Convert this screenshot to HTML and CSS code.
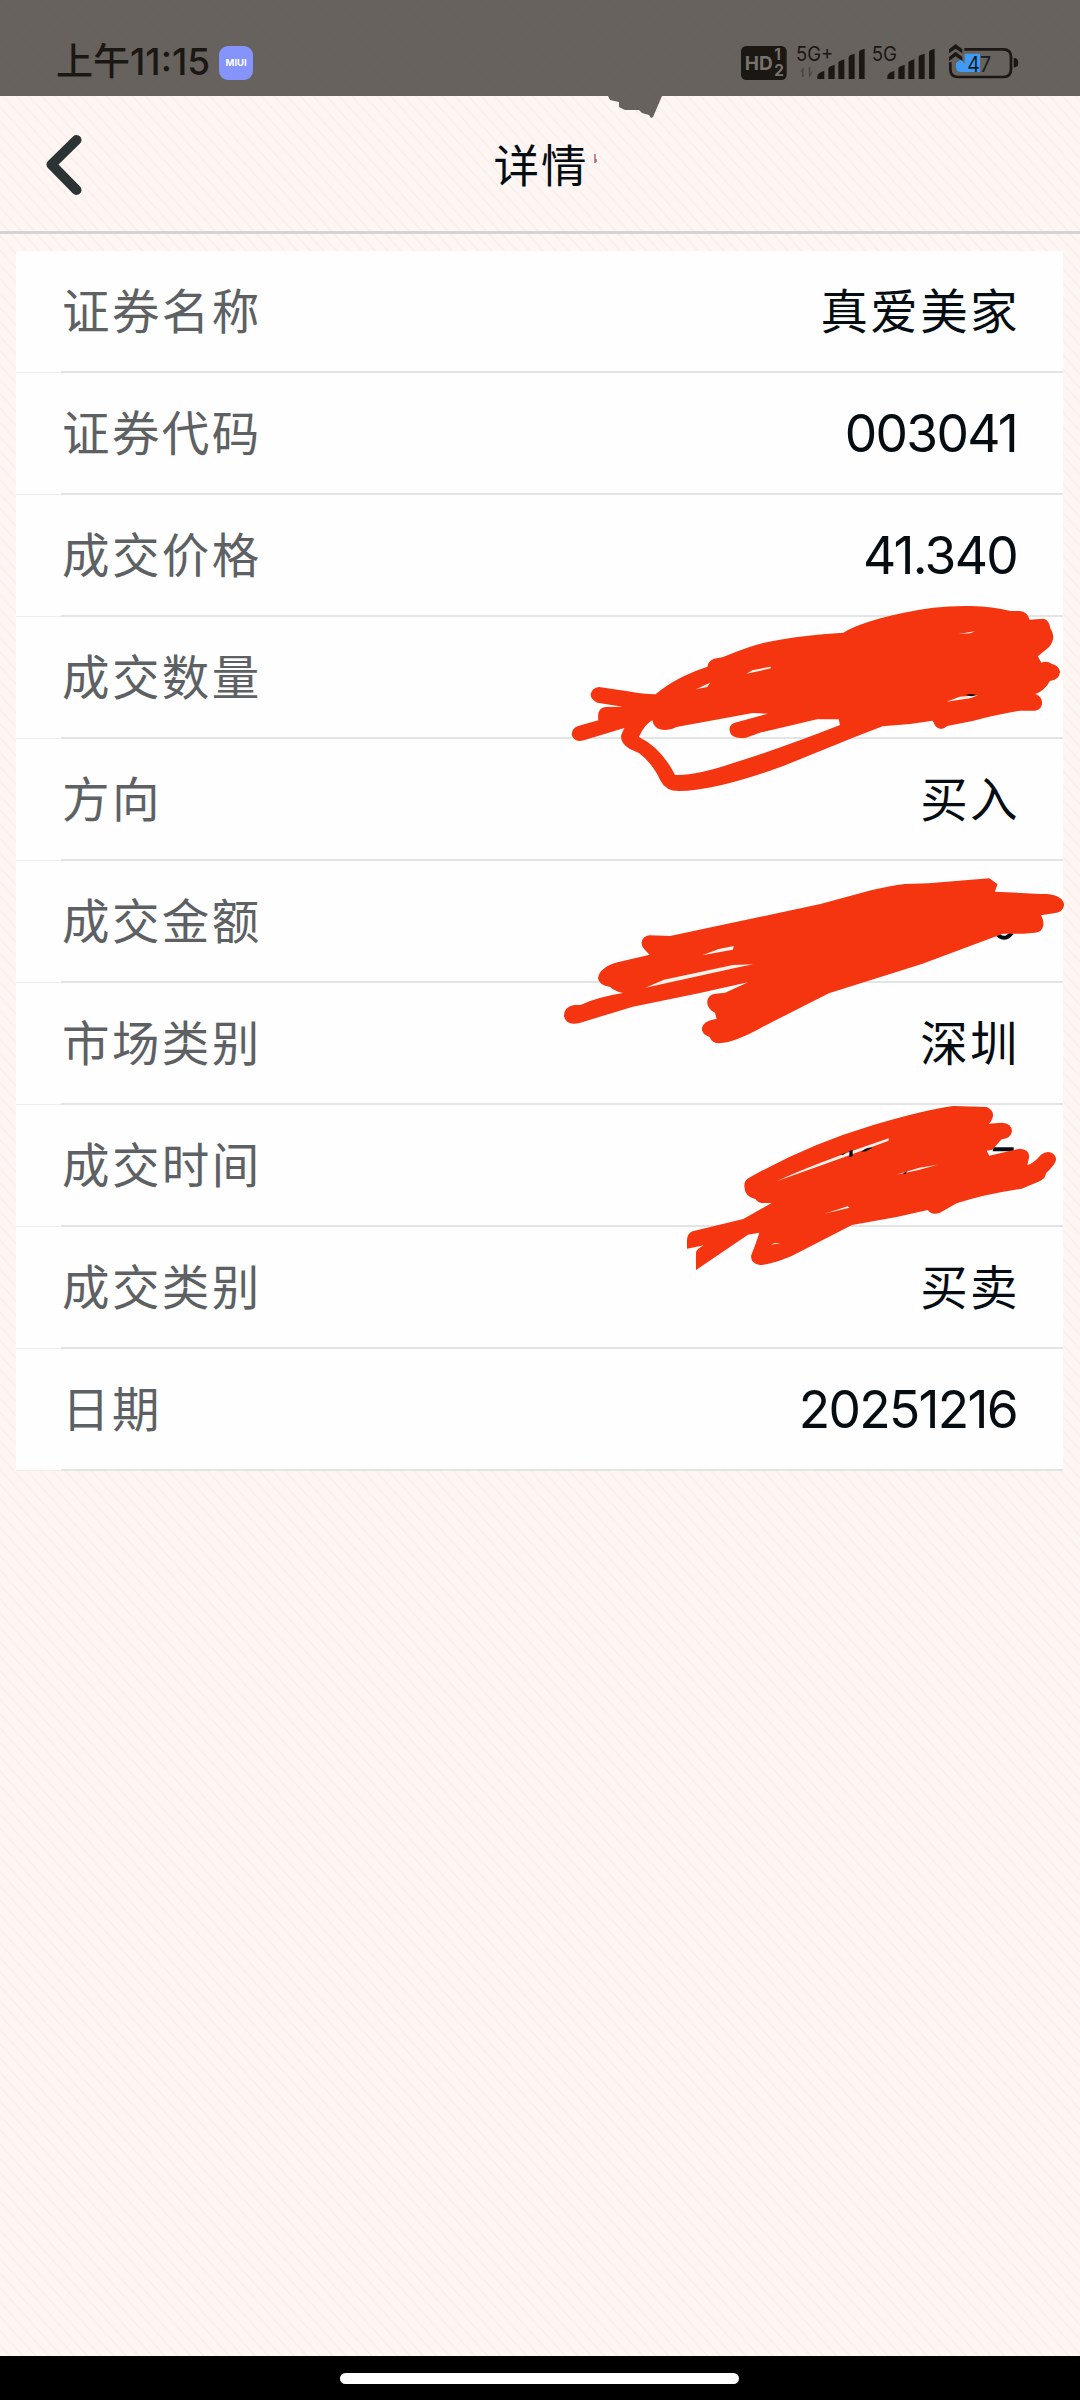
FILE: index.html
```html
<!DOCTYPE html>
<html lang="zh-CN">
<head>
<meta charset="utf-8">
<title>详情</title>
<link rel="stylesheet" href="styles.css">
</head>
<body>
<div class="screen">
  <header class="status">
    <div class="status-left">
      <span class="clock">上午11:15</span>
      <span class="miui">MIUI</span>
    </div>
    <svg class="status-icons" width="320" height="90" viewBox="0 0 960 270">
      <rect x="63" y="78" width="137" height="102" rx="16" fill="#1b1713"/>
      <g class="hd"><text x="74" y="150" font-size="58" textLength="84" lengthAdjust="spacingAndGlyphs">HD</text><text x="163" y="121" font-size="46">1</text><text x="163" y="169" font-size="46">2</text></g>
      <g class="net"><text x="228" y="123" font-size="60" textLength="112" lengthAdjust="spacingAndGlyphs">5G+</text><text x="455" y="123" font-size="60" textLength="76" lengthAdjust="spacingAndGlyphs">5G</text></g>
      <g fill="#4a4540"><path d="M240 156l11-15v30h-5v-17zM266 142h5v18l10-9-14 23z"/></g>
      <g fill="#1b1713">
        <path d="M292 177v-10q2-6 10-10l11-5v25zM325 177v-32q2-5 7-6l12-5v43zM355 177v-49q1-5 6-6l12-4v59zM386 177v-66q1-5 6-6l12-4v76zM417 177v-81q1-5 6-6l11-4v91z"/>
        <path d="M502 177v-10q2-6 10-10l11-5v25zM535 177v-32q2-5 7-6l12-5v43zM565 177v-49q1-5 6-6l12-4v59zM596 177v-66q1-5 6-6l12-4v76zM627 177v-81q1-5 6-6l11-4v91z"/>
      </g>
      <path d="M708 130l15-12 11 14V101h46v55h-60q-12-2-12-14z" fill="#3f9bf6"/>
      <path d="M733 88H850q23 0 23 23v37q0 23-23 23H714q-23 0-23-23v-21" fill="none" stroke="#1b1713" stroke-width="8"/>
      <path d="M881 113q14 1 14 15t-14 15z" fill="#1b1713"/>
      <path d="M687 88l20-16 20 16v12l-20-14-20 14zM687 111l20-16 20 16v12l-20-14-20 14z" fill="#1b1713"/>
      <text class="level" x="742" y="155" font-size="66" textLength="71" lengthAdjust="spacingAndGlyphs">47</text>
    </svg>
  </header>
  <nav class="titlebar">
    <svg class="back" width="36" height="60" viewBox="0 0 36 60"><path d="M30.500 5L5.500 29.500L30.500 55" /></svg>
    <h1>详情</h1>
    <svg class="torn" width="56" height="26" viewBox="0 0 56 26"><path d="M0 0H54L45 21L43 22L41 19L34 17L31 14H17L11 11V6L2 4Z"/></svg>
    <svg class="tick" width="4" height="10" viewBox="0 0 4 10"><path d="M1 0v9M2 5v3"/></svg>
  </nav>
  <main class="card">
    <div class="row"><span class="label">证券名称</span><span class="value">真爱美家</span></div>
    <div class="row"><span class="label">证券代码</span><span class="value num">003041</span></div>
    <div class="row"><span class="label">成交价格</span><span class="value num">41.340</span></div>
    <div class="row"><span class="label">成交数量</span>
      <svg class="mark mark-amount" width="530" height="220" viewBox="0 0 1568 660" preserveAspectRatio="none">
        <path d="M145 291L230 304Q275 313 312 313Q370 262 466 230Q467 213 485 206L510 202Q610 160 660 153Q740 136 868 128Q920 96 1040 70Q1140 46 1245 48Q1310 50 1362 63H1390Q1412 65 1419 89L1460 86Q1477 89 1480 115Q1500 142 1476 172L1443 199L1454 218Q1470 212 1484 221Q1506 226 1509 246Q1506 270 1479 273Q1464 302 1436 312Q1456 320 1456 340Q1454 360 1436 362H1390Q1310 376 1250 393L1175 408Q1157 426 1140 408L1132 392Q1060 405 984 409L900 442L690 528Q490 602 382 603Q342 603 327 572Q302 518 263 489L235 476Q206 458 211 434L220 414L100 451Q70 459 64 432Q66 414 83 408L143 391Q138 353 165 351L215 350L140 338Q121 330 120 313Q124 294 145 291ZM303 391Q282 400 263 441Q330 474 370 555Q430 558 540 520Q690 472 858 405L854 388H790L625 427L580 443Q535 450 531 420Q530 400 555 396L645 371L600 369L374 411Q350 426 320 416Q305 408 303 391Z"/>
        <path class="gap" d="M582 251L598 241 652 230 654 235ZM432 298l25-12 17-8-9 13zM1173 335l39-15 55-4-24 9zM1208 132l49-8-13 6z"/>
        <path class="ink" d="M1230 315q15-6 31 0q-15 7-31 0z"/>
      </svg>
    </div>
    <div class="row"><span class="label">方向</span><span class="value">买入</span></div>
    <div class="row"><span class="label">成交金额</span>
      <svg class="mark mark-sum" width="530" height="200" viewBox="0 0 1568 600" preserveAspectRatio="none">
        <path class="digit" d="M1319 218q23 31 48 0"/>
        <path d="M295 284Q270 263 271 248Q274 228 294 226L355 228L800 132L950 91Q1005 77 1050 72L1120 70L1300 55L1324 73L1316 95L1450 102H1470Q1518 106 1521 135Q1518 158 1490 160L1452 166Q1460 176 1460 195Q1456 217 1435 218L1400 221H1340L1100 312L825 400L630 500Q550 546 500 550Q480 550 472 531Q450 523 449 507Q452 482 493 477L488 458Q465 447 465 426Q467 403 490 401L518 398L586 367L440 400L245 440L90 488Q48 499 41 468Q42 440 72 435H90Q140 411 216 399Q190 393 178 381Q144 375 142 354Q147 322 200 307Z"/>
        <path class="gap" d="M450 286l49-19 45-9-3 11zM282 383l55-24 204-44 60-2-50 10z"/>
      </svg>
    </div>
    <div class="row"><span class="label">市场类别</span><span class="value">深圳</span></div>
    <div class="row"><span class="label">成交时间</span>
      <svg class="mark mark-time" width="420" height="220" viewBox="0 0 1260 660">
        <path class="ink" d="M1000 202H1061V214H998Z"/>
        <path d="M253 319Q252 300 270 292Q440 195 640 135Q800 88 880 78L980 81Q1000 90 999 107Q997 122 986 131L1025 128Q1056 130 1056 154Q1053 176 1025 178L997 209L980 212L988 227L1080 206Q1107 208 1108 229L1102 255Q1120 251 1143 224Q1158 212 1175 218Q1189 227 1188 240Q1187 252 1158 280Q1156 299 1135 305L1085 326Q970 343 890 370L840 398Q815 407 803 390L710 411L576 435L395 528Q330 555 300 555Q273 552 273 528L288 488L298 458L264 464L108 570V517Q110 507 132 496L81 506V480Q82 460 98 454L250 417L335 369H305Q292 367 287 358Q253 350 253 319Z"/>
        <path class="gap" d="M350 304Q460 252 686 175V182L560 229ZM708 284l70-21 55-9-60 17zM493 401l70-22 6 4zM332 494l12-5 18 1z"/>
        <path class="ink" d="M568 213l10-3v18l-10 4zM604 215q18-15 34-12l-20 11zM728 280l14-6-5 8zM541 225l18-8-10 8zM953 205l12 4z"/>
      </svg>
    </div>
    <div class="row"><span class="label">成交类别</span><span class="value">买卖</span></div>
    <div class="row"><span class="label">日期</span><span class="value num">20251216</span></div>
  </main>
  <footer class="gesture"><span class="pill"></span></footer>
</div>
</body>
</html>
```
FILE: styles.css
```css
* { box-sizing: border-box; }
body { margin: 0; }
.screen {
  width: 1080px;
  height: 2400px;
  display: flex;
  flex-direction: column;
  background: repeating-linear-gradient(48deg, #fef6f3 0 6.500px, #f9eeeb 8px, #fef6f3 9.600px);
  font-family: "Noto Sans CJK SC", sans-serif;
  color: #060d12;
}
.status {
  height: 96px;
  flex: none;
  display: flex;
  justify-content: space-between;
  padding: 20px 40px 0 56px;
  background: repeating-linear-gradient(48deg, #67625e 0 6.500px, #65615d 8px, #67625e 9.600px);
}
.status-left { display: flex; height: 86px; align-items: center; gap: 9px; }
.clock {
  font-family: Inter, "Noto Sans CJK SC", sans-serif;
  font-size: 37px;
  font-weight: 500;
  line-height: 50px;
  margin-top: -3px;
  color: #1b1713;
  white-space: nowrap;
}
.miui {
  width: 34px;
  height: 34px;
  border-radius: 9px;
  background: #8494fb;
  color: #fff;
  font: 700 9.500px/34px Inter, sans-serif;
  text-align: center;
}
.status-icons { flex: none; }
.status-icons text { font-family: Inter, sans-serif; }
.hd text { fill: #77726d; font-weight: 700; }
.net text { fill: #1b1713; }
.status-icons .level { fill: #171c24; }
.titlebar {
  position: relative;
  height: 138px;
  flex: none;
  display: flex;
  align-items: center;
  justify-content: center;
  padding-left: 2px;
  border-bottom: 3px solid #d2d5d1;
}
.titlebar h1 { margin: 0; font-size: 45.500px; font-weight: 400; letter-spacing: 2px; line-height: 66px; padding-bottom: 1px; }
.back { position: absolute; left: 46px; top: 39px; }
.back path { fill: none; stroke: #2c3335; stroke-width: 10; stroke-linecap: round; stroke-linejoin: round; }
.torn { position: absolute; left: 608px; top: 0; fill: #67625e; }
.tick { position: absolute; left: 594px; top: 58px; fill: none; stroke: #8d2335; }
.card { position: relative; margin: 17px 17px 0 16px; background: #fefefe; }
.row {
  height: 122px;
  display: flex;
  align-items: center;
  justify-content: space-between;
  padding: 0 43px 2px 46px;
  background:
    linear-gradient(#e3e5e4, #e3e5e4) 45px 100% / 100% 2px no-repeat,
    linear-gradient(#eceeed, #eceeed) 0 100% / 45px 1px no-repeat;
}
.label, .value { font-size: 47.500px; letter-spacing: 2.400px; line-height: 70px; padding-bottom: 4px; white-space: nowrap; }
.label { color: #5d6163; }
.value.num { font-family: Inter, sans-serif; font-size: 51.500px; letter-spacing: -1.700px; padding: 0 3px 0 0; }
.mark { position: absolute; z-index: 1; fill: #f53410; }
.mark-amount { left: 534px; top: 339px; }
.mark-sum { left: 534px; top: 609px; }
.mark-time { left: 644px; top: 829px; }
.mark .gap { fill: #fdf3ea; }
.mark .ink { fill: #060d12; }
.mark .digit { fill: none; stroke: #060d12; stroke-width: 12; }
.gesture {
  height: 44px;
  flex: none;
  margin-top: auto;
  padding-top: 17px;
  display: flex;
  justify-content: center;
  background: #000;
}
.pill { width: 399px; height: 11px; margin-right: 2px; border-radius: 6px; background: #fff; }
```
